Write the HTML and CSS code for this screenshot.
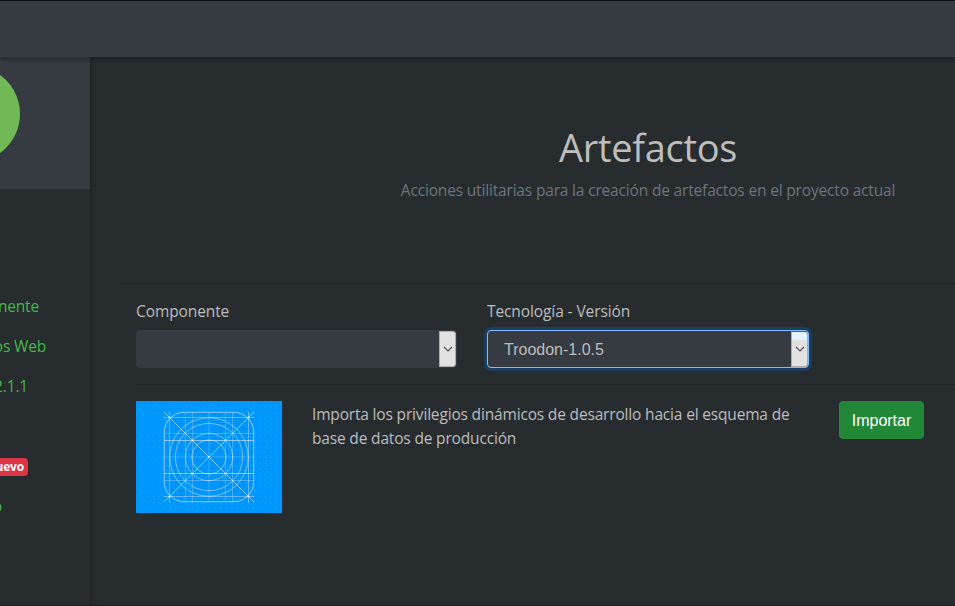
FILE: index.html
```html
<!DOCTYPE html>
<html lang="es">
<head>
<meta charset="utf-8">
<title>Artefactos</title>
<link rel="stylesheet" href="styles.css">
</head>
<body>
<header class="topbar"></header>
<div class="layout">
  <aside class="sidebar">
    <div class="profile"><div class="avatar"></div></div>
    <nav class="menu">
      <a class="w39"><span>nente</span></a>
      <a class="w46"><span>os Web</span></a>
      <a class="w28"><span>2.1.1</span></a>
      <a></a>
      <a class="w28"><span class="badge">Nuevo</span></a>
      <a class="w2"><span>o</span></a>
    </nav>
  </aside>
  <main class="content">
    <section class="hero">
      <h1>Artefactos</h1>
      <p>Acciones utilitarias para la creación de artefactos en el proyecto actual</p>
    </section>
    <form class="filters">
      <div class="field">
        <label>Componente</label>
        <div class="select"><span></span><i class="arrow"><svg width="10" height="6" viewBox="0 0 10 6"><path d="M1 1l4 4 4-4"/></svg></i></div>
      </div>
      <div class="field wide">
        <label>Tecnología - Versión</label>
        <div class="select focus"><span>Troodon-1.0.5</span><i class="arrow"><svg width="10" height="6" viewBox="0 0 10 6"><path d="M1 1l4 4 4-4"/></svg></i></div>
      </div>
    </form>
    <section class="artifact">
      <svg class="thumb" width="146" height="112" viewBox="0 0 146 112">
        <defs>
          <pattern id="dots" x="5.7" y="5.5" width="5.6" height="5.6" patternUnits="userSpaceOnUse"><circle cx=".7" cy=".7" r=".55" fill="#fff" opacity=".22"/></pattern>
          <pattern id="mesh" x="28" y="11" width="5.6" height="5.6" patternUnits="userSpaceOnUse"><path d="M0 .5H5.6M.5 0V5.6" stroke="#006dc7" opacity=".32"/></pattern>
          <clipPath id="round"><rect x="28.5" y="11.5" width="89" height="89" rx="20"/></clipPath>
        </defs>
        <rect width="146" height="112" fill="#0097ff"/>
        <rect x="5" y="5" width="136" height="103" fill="url(#dots)"/>
        <rect x="28" y="11" width="90" height="90" rx="20" fill="url(#mesh)"/>
        <g fill="none" stroke="#fff" stroke-width="1">
          <g opacity=".24" clip-path="url(#round)">
            <path d="M49.5 11V101M56.5 11V101M73 11V101M89.5 11V101M96.5 11V101M28 32.5H118M28 39.5H118M28 56H118M28 72.5H118M28 79.5H118"/>
          </g>
          <path opacity=".36" d="M33.5 11V102M112.5 11V102M28 16.5H118M28 95.5H118M28 39.5H118M28 72.5H118"/>
          <g opacity=".45">
            <circle cx="73" cy="56" r="39.3"/><circle cx="73" cy="56" r="33.7"/><circle cx="73" cy="56" r="23.6"/><circle cx="73" cy="56" r="17"/>
          </g>
          <rect opacity=".55" x="28.3" y="11.3" width="89.4" height="89.4" rx="20"/>
          <path opacity=".5" d="M28 11L118 101M118 11L28 101"/>
        </g>
        <g fill="#fff" opacity=".75"><circle cx="33.5" cy="16.5" r="1"/><circle cx="112.5" cy="16.5" r="1"/><circle cx="33.5" cy="95.5" r="1"/><circle cx="112.5" cy="95.5" r="1"/><circle cx="73" cy="56" r="1"/><circle cx="56.3" cy="39.3" r=".8"/><circle cx="89.7" cy="39.3" r=".8"/><circle cx="56.3" cy="72.7" r=".8"/><circle cx="89.7" cy="72.7" r=".8"/></g>
      </svg>
      <p class="desc">Importa los privilegios dinámicos de desarrollo hacia el esquema de<br>base de datos de producción</p>
      <button class="btn" type="button">Importar</button>
    </section>
  </main>
</div>
</body>
</html>
```
FILE: styles.css
```css
* { box-sizing: border-box; }
html, body { height: 100%; }
body {
  margin: 0;
  display: flex;
  flex-direction: column;
  overflow: hidden;
  background: #272c2f;
  color: #bdbdbd;
  font: 15.5px/24px "Open Sans", "Noto Sans", sans-serif;
  letter-spacing: -0.17px;
  border-bottom: 1px solid #1b1c22;
}
.topbar {
  flex: 0 0 57px;
  background: #363a41;
  border-top: 1px solid #101113;
  box-shadow: 0 2px 5px rgba(0, 0, 0, .3);
  z-index: 2;
}
.layout { flex: 1; display: flex; min-height: 0; }
.sidebar {
  width: 90px;
  overflow: hidden;
  box-shadow: 1px 0 5px rgba(0, 0, 0, .3);
  z-index: 1;
}
.profile { height: 132px; background: #363a41; display: flex; align-items: center; overflow: hidden; }
.avatar { flex: none; width: 96px; height: 96px; margin: -18px 0 0 -76px; border-radius: 50%; background: #71b956; }
.menu { margin-top: 97px; color: #46b74b; }
.menu a { height: 40px; display: flex; align-items: center; justify-content: flex-end; }
.menu span { white-space: nowrap; }
.w39 { width: 39px; }
.w46 { width: 46px; }
.w28 { width: 28px; }
.w2 { width: 2px; }
.menu .badge {
  margin-top: 2px;
  padding: 0 4px;
  border-radius: 4px;
  background: #dc3545;
  color: #fff;
  font-weight: 700;
  font-size: 12px;
  line-height: 18px;
}
.content { flex: 1; min-width: 0; padding: 0 31px 0 46px; }
.hero {
  height: 227px;
  margin: 0 -31px 0 -15px;
  padding: 64px 0 0 220px;
  display: flex;
  flex-direction: column;
  align-items: center;
  border-bottom: 1px solid #24282b;
}
.hero h1 { margin: 0; font-size: 38px; line-height: 52px; font-weight: 400; letter-spacing: -0.3px; }
.hero p { margin: 5px 0 0; color: #6c757d; white-space: nowrap; }
.filters { display: flex; gap: 30px; padding-top: 15px; height: 101px; border-bottom: 1px solid #222629; margin-right: -31px; }
.field { width: 321px; }
.field.wide { width: 322px; }
.field label { display: block; height: 31px; letter-spacing: -0.1px; }
.select {
  height: 38px;
  display: flex;
  justify-content: space-between;
  align-items: stretch;
  padding: 1px;
  border-radius: 4px;
  background: #363a41;
  font: 16px/38px "Liberation Sans", sans-serif;
  letter-spacing: 0;
}
.select span { padding-left: 16px; }
.arrow {
  width: 17px;
  background: #e1e1e1;
  border: 1px solid #adadad;
  border-radius: 0 3px 3px 0;
  display: flex;
  align-items: center;
  justify-content: center;
}
.arrow path { fill: none; stroke: #555; stroke-width: 1.2; }
.focus { padding: 0; border: 1px solid #80bdff; box-shadow: 0 0 0 3px #1c3f61; }
.focus .arrow { background: linear-gradient(#e5f1fb 8px, #e1e1e1 8px); border-top-color: #0078d7; }
.artifact { display: flex; align-items: flex-start; padding-top: 16px; }
.thumb { flex: none; }
.desc { margin: 1px 0 0 30px; flex: 1; white-space: nowrap; }
.btn {
  width: 85px;
  height: 38px;
  padding: 2px 0 0;
  border: 1px solid #218838;
  border-radius: 4px;
  background: #218838;
  color: #fff;
  font: 16px/24px "Liberation Sans", sans-serif;
}
```
